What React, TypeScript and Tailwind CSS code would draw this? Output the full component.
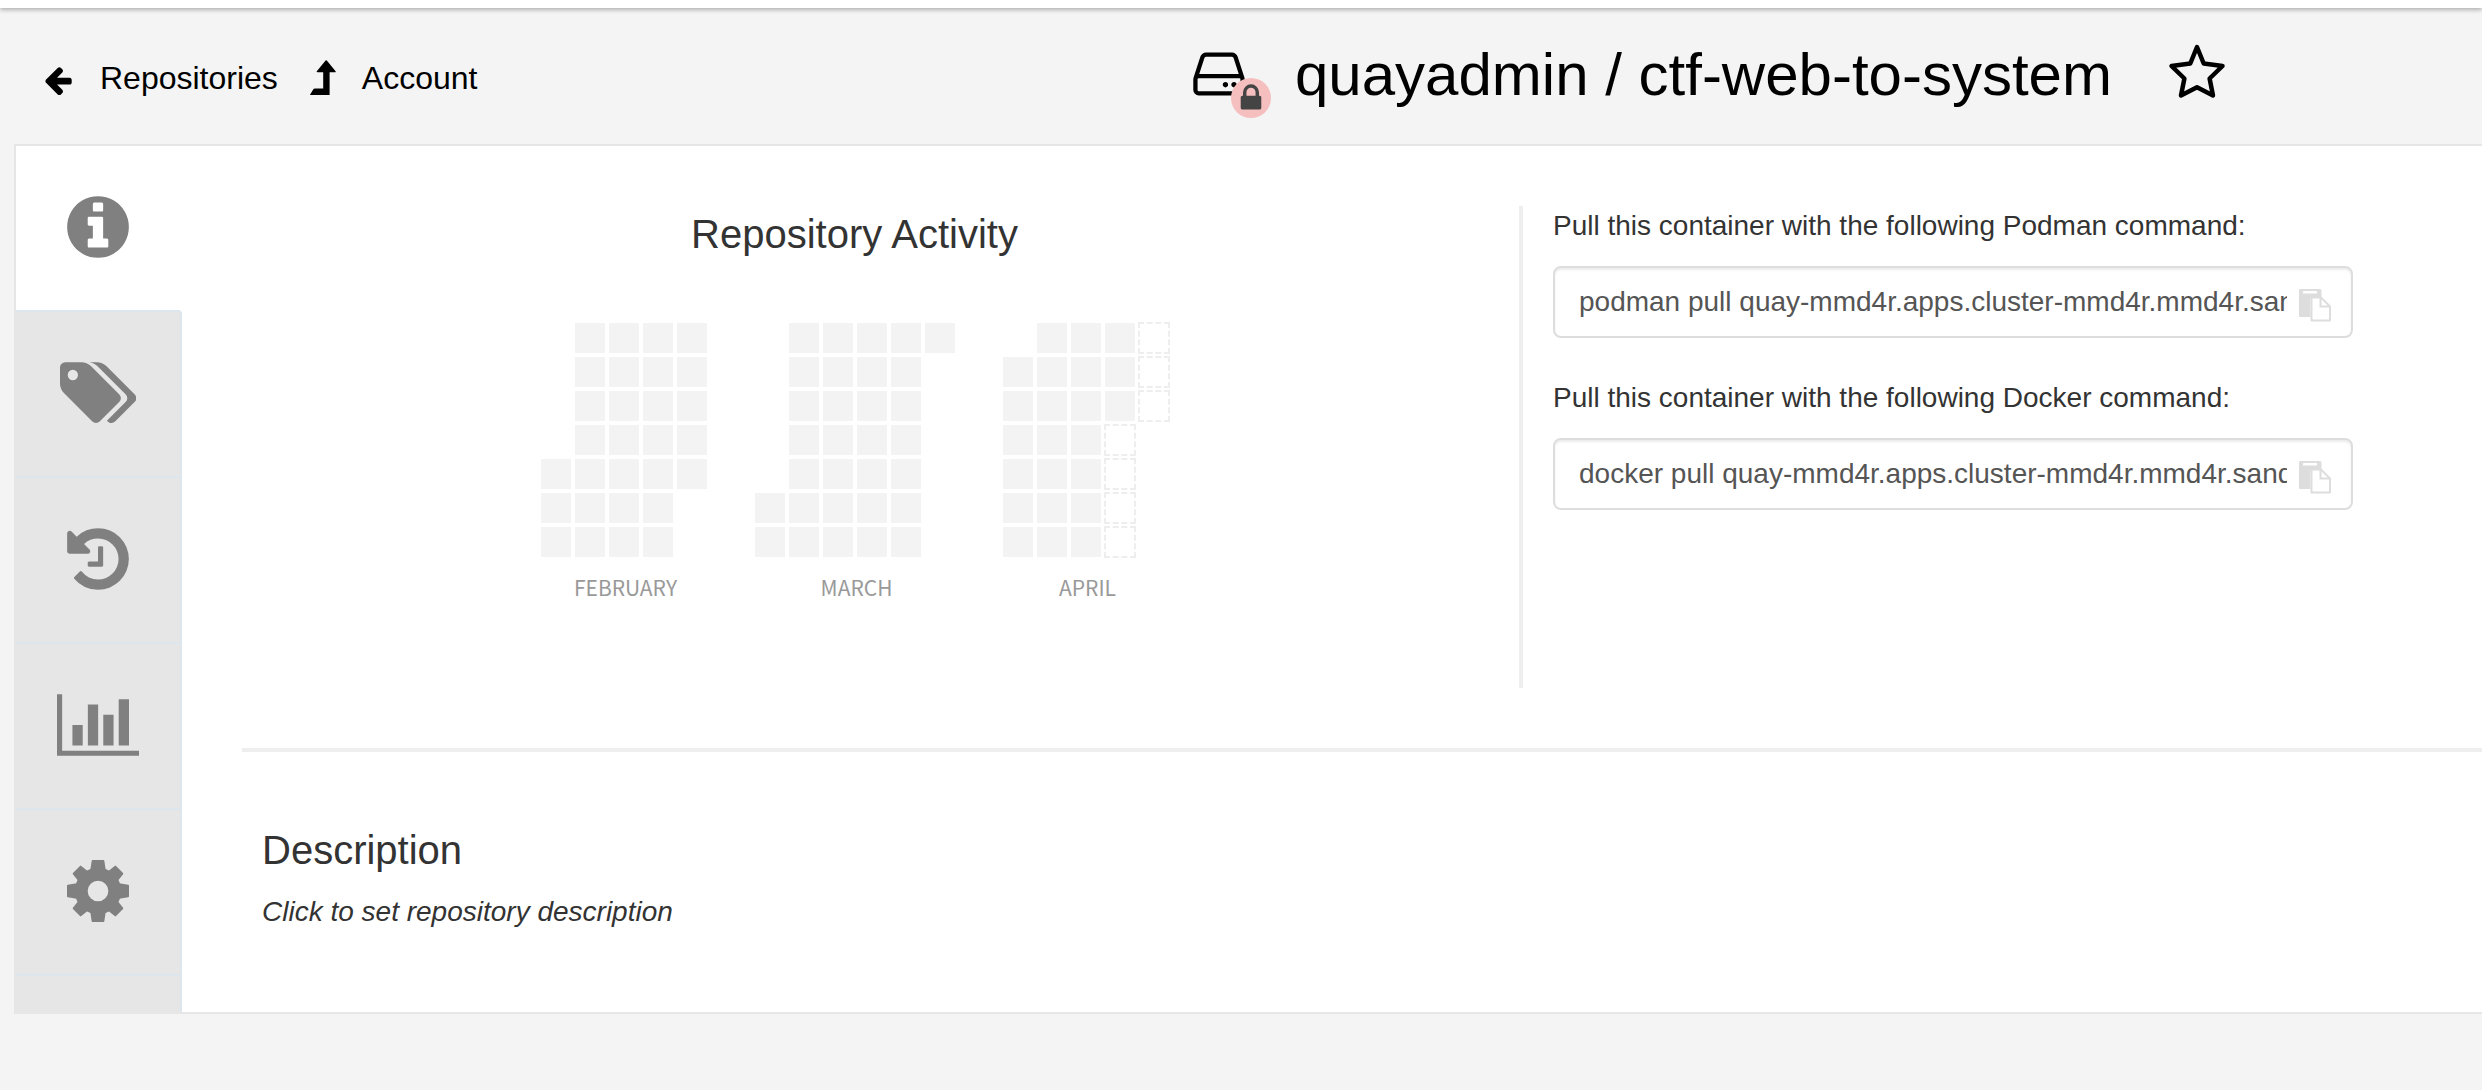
import React from "react";

type GlyphProps = { d: string; viewBox?: string; className: string };

function Glyph({ d, viewBox = "0 0 1792 1792", className }: GlyphProps) {
  return (
    <svg viewBox={viewBox} className={className} fill="currentColor" aria-hidden="true">
      <path d={d} />
    </svg>
  );
}

const ARROW_LEFT =
  "M1664 896v128q0 53-32.5 90.5t-84.5 37.5h-704l293 294q38 36 38 90t-38 90l-75 76q-37 37-90 37-52 0-91-37l-651-652q-37-37-37-90 0-52 37-91l651-650q38-38 91-38 52 0 90 38l75 74q38 38 38 91t-38 91l-293 293h704q52 0 84.5 37.5t32.5 90.5z";
const HDD =
  "M1168 1216q0 33-23.5 56.5t-56.5 23.5-56.5-23.5-23.5-56.5 23.5-56.5 56.5-23.5 56.5 23.5 23.5 56.5zm256 0q0 33-23.5 56.5t-56.5 23.5-56.5-23.5-23.5-56.5 23.5-56.5 56.5-23.5 56.5 23.5 23.5 56.5zm112 160v-320q0-13-9.5-22.5t-22.5-9.5h-1216q-13 0-22.5 9.5t-9.5 22.5v320q0 13 9.5 22.5t22.5 9.5h1216q13 0 22.5-9.5t9.5-22.5zm-1230-480h1180l-157-482q-4-13-16-21.5t-26-8.5h-782q-14 0-26 8.5t-16 21.5zm1358 160v320q0 66-47 113t-113 47h-1216q-66 0-113-47t-47-113v-320q0-25 16-75l197-606q17-53 63-86t101-33h782q55 0 101 33t63 86l197 606q16 50 16 75z";
const LOCK =
  "M640 768h512v-192q0-106-75-181t-181-75-181 75-75 181v192zm832 96v576q0 40-28 68t-68 28h-960q-40 0-68-28t-28-68v-576q0-40 28-68t68-28h32v-192q0-184 132-316t316-132 316 132 132 316v192h32q40 0 68 28t28 68z";
const INFO =
  "M1152 1376v-160q0-14-9-23t-23-9h-96v-512q0-14-9-23t-23-9h-320q-14 0-23 9t-9 23v160q0 14 9 23t23 9h96v320h-96q-14 0-23 9t-9 23v160q0 14 9 23t23 9h448q14 0 23-9t9-23zm-128-896v-160q0-14-9-23t-23-9h-192q-14 0-23 9t-9 23v160q0 14 9 23t23 9h192q14 0 23-9t9-23zm640 416q0 209-103 385.5t-279.5 279.5-385.5 103-385.5-103-279.5-279.5-103-385.5 103-385.5 279.5-279.5 385.5-103 385.5 103 279.5 279.5 103 385.5z";
const TAGS =
  "M448 448q0-53-37.5-90.5t-90.5-37.5-90.5 37.5-37.5 90.5 37.5 90.5 90.5 37.5 90.5-37.5 37.5-90.5zm1067 576q0 53-37 90l-491 492q-39 37-91 37-53 0-90-37l-715-716q-38-37-64.5-101t-26.5-117v-416q0-52 38-90t90-38h416q53 0 117 26.5t102 64.5l715 714q37 39 37 91zm384 0q0 53-37 90l-491 492q-39 37-91 37-36 0-59-14t-53-45l470-470q37-37 37-90 0-52-37-91l-715-714q-38-38-102-64.5t-117-26.5h224q53 0 117 26.5t102 64.5l715 714q37 39 37 91z";
const HISTORY =
  "M1664 896q0 156-61 298t-164 245-245 164-298 61q-172 0-327-72.5t-264-204.5q-7-10-6.5-22.5t8.5-20.5l137-138q10-9 25-9 16 2 23 12 73 95 179 147t225 52q104 0 198.5-40.5t163.5-109.5 109.5-163.5 40.5-198.5-40.5-198.5-109.5-163.5-163.5-109.5-198.5-40.5q-98 0-188 35.5t-160 101.5l137 138q31 30 14 69-17 40-59 40h-448q-26 0-45-19t-19-45v-448q0-42 40-59 39-17 69 14l130 129q107-101 244.5-156.5t284.5-55.5q156 0 298 61t245 164 164 245 61 298zm-640-288v448q0 14-9 23t-23 9h-320q-14 0-23-9t-9-23v-64q0-14 9-23t23-9h224v-352q0-14 9-23t23-9h64q14 0 23 9t9 23z";
const CHART =
  "M640 896v512h-256v-512h256zm384-512v1024h-256v-1024h256zm1024 1152v128h-2048v-1536h128v1408h1920zm-640-896v768h-256v-768h256zm384-384v1152h-256v-1152h256z";

function Cog() {
  return (
    <svg
      viewBox="-108 -108 216 216"
      className="h-[72px]"
      fill="currentColor"
      stroke="currentColor"
      strokeWidth="6"
      strokeLinejoin="round"
      fillRule="evenodd"
      aria-hidden="true"
    >
      <path d="M-16-90H16L20-64L33-58L52-73L73-52L58-33L64-20L90-16V16L64 20L58 33L73 52L52 73L33 58L20 64L16 90H-16L-20 64L-33 58L-52 73L-73 52L-58 33L-64 20L-90 16V-16L-64-20L-58-33L-73-52L-52-73L-33-58L-20-64ZM34 0A34 34 0 1 0-34 0A34 34 0 1 0 34 0Z" />
    </svg>
  );
}

const tabs = [
  { label: "Information", icon: <Glyph d={INFO} className="h-[72px]" /> },
  { label: "Tags", icon: <Glyph d={TAGS} viewBox="0 0 1899 1792" className="h-[72px]" /> },
  { label: "Tag History", icon: <Glyph d={HISTORY} className="h-[72px]" /> },
  { label: "Usage Logs", icon: <Glyph d={CHART} viewBox="0 0 2048 1792" className="h-[72px]" /> },
  { label: "Settings", icon: <Cog /> },
];

// One string per weekday row: "x" is a past day, "o" an upcoming day, "." is outside the month.
const months = [
  { name: "FEBRUARY", rows: [".xxxx", ".xxxx", ".xxxx", ".xxxx", "xxxxx", "xxxx.", "xxxx."] },
  { name: "MARCH", rows: [".xxxxx", ".xxxx.", ".xxxx.", ".xxxx.", ".xxxx.", "xxxxx.", "xxxxx."] },
  { name: "APRIL", rows: [".xxxo", "xxxxo", "xxxxo", "xxxo.", "xxxo.", "xxxo.", "xxxo."] },
];

const dayStyle: Record<string, string> = {
  x: "size-[30px] bg-[#f3f3f3]",
  o: "-m-px size-8 border-2 border-dashed border-[#eeeeee]",
  ".": "size-[30px]",
};

function Month({ name, rows }: { name: string; rows: string[] }) {
  return (
    <div className="flex flex-col items-center">
      <div className="flex flex-col gap-1">
        {rows.map((row, r) => (
          <div key={r} className="flex gap-1">
            {row.split("").map((day, c) => (
              <div key={c} className={dayStyle[day]} />
            ))}
          </div>
        ))}
      </div>
      <div className="mt-3.5 pl-1 font-['Noto_Sans_CJK_SC',sans-serif] text-[21px] leading-8 text-[#999999]">
        {name}
      </div>
    </div>
  );
}

function CopyIcon() {
  return (
    <svg viewBox="0 0 32 33" className="h-[33px] w-8" aria-hidden="true">
      <path d="M1 0h20a1.500 1.500 0 0 1 1.500 1.500V8H13a1.500 1.500 0 0 0-1.500 1.500V28H1a1 1 0 0 1-1-1V1a1 1 0 0 1 1-1z" fill="#dddddd" />
      <rect x="4" y="2" width="14" height="2.500" rx="0.500" fill="#fff" />
      <path d="M12.500 8.500H22L31 17.500V31.500H12.500z" fill="#fff" stroke="#dddddd" strokeWidth="2" strokeLinejoin="round" />
      <path d="M21.500 8.500V17.500H31" fill="none" stroke="#dddddd" strokeWidth="2" />
    </svg>
  );
}

function PullCommand({ id, tool, command }: { id: string; tool: string; command: string }) {
  return (
    <div className="flex flex-col">
      <label htmlFor={id} className="text-[28px] leading-10 text-[#333333]">
        Pull this container with the following {tool} command:
      </label>
      <div className="mt-5 flex h-[72px] max-w-[800px] items-center rounded-lg border-2 border-[#dddddd] bg-white pr-5 pl-6 shadow-[inset_0_2px_2px_rgba(0,0,0,0.075)]">
        <input
          id={id}
          readOnly
          value={command}
          className="min-w-0 flex-1 bg-transparent text-[28px] leading-10 text-[#555555] outline-none"
        />
        <button type="button" aria-label={"Copy " + tool + " command"} className="mt-1.5 ml-3">
          <CopyIcon />
        </button>
      </div>
    </div>
  );
}

export default function App() {
  return (
    <div className="min-h-screen overflow-x-hidden bg-[#f4f4f4] font-['Liberation_Sans',Arial,sans-serif]">
      <div className="h-2 bg-white shadow-[0_2px_4px_rgba(0,0,0,0.28)]" />

      <header className="grid h-[136px] grid-cols-[1191fr_1291fr] text-black">
        <nav className="flex items-start pt-[50px] pl-[42px] text-[32px] leading-10">
          <a href="#repositories" className="flex items-center">
            <Glyph d={ARROW_LEFT} className="mt-1 size-8" />
            <span className="ml-[26px]">Repositories</span>
          </a>
          <a href="#account" className="ml-8 flex items-center">
            <svg viewBox="0 0 26 36" className="h-9 w-[26px]" fill="currentColor" aria-hidden="true">
              <path d="M15.800 0.300Q16.300 0 16.800 0.600L25.600 11.200Q26 12.200 25 12.200H19.600V35H.5Q-.2 35 .3 34.200L3.500 29Q4 28.400 4.800 28.400H13.200V12.200H7.500Q6.200 12.200 6.800 11.200Z" />
            </svg>
            <span className="ml-[26px]">Account</span>
          </a>
        </nav>
        <div className="flex items-start pt-8">
          <div className="relative -ml-0.5">
            <Glyph d={HDD} className="mt-1 size-[60px]" />
            <span className="absolute top-[38px] left-[42px] flex size-10 items-center justify-center rounded-full bg-[#f5bfbf] text-[#444444]">
              <Glyph d={LOCK} className="size-8" />
            </span>
          </div>
          <h1 className="ml-[46px] text-[60px] leading-[70px] whitespace-nowrap">quayadmin / ctf-web-to-system</h1>
          <button type="button" aria-label="Star repository" className="mt-1 ml-14">
            <svg viewBox="0 0 58 56" className="h-14 w-[58px]" fill="none" stroke="currentColor" strokeWidth="4.500" strokeMiterlimit="3" strokeLinejoin="round" aria-hidden="true">
              <path d="M29 3L35.700 19.500L54.500 22L41.600 34.500L45 51.500L29 43.200L13 51.500L16.400 34.500L3.500 22L22.300 19.500Z" />
            </svg>
          </button>
        </div>
      </header>

      <main className="ml-3.5 flex border-y-2 border-l-2 border-[#e6e6e6] bg-white">
        <nav className="flex w-[166px] shrink-0 flex-col text-[#808080]">
          {tabs.map((tab, i) => (
            <button
              key={tab.label}
              type="button"
              aria-label={tab.label}
              className={
                i === 0
                  ? "flex h-[164px] items-center justify-center bg-white pr-0.5 pb-0.5"
                  : i === 1
                    ? "flex h-[166px] items-center justify-center rounded-tr border-t-2 border-r-2 border-[#dde6ed] bg-[#e6e6e6] pb-0.5"
                    : "flex h-[166px] items-center justify-center border-t-2 border-r-2 border-[#dde6ed] bg-[#e6e6e6] pb-0.5"
              }
            >
              {tab.icon}
            </button>
          ))}
          <div className="flex-1 border-t-2 border-r-2 border-[#dde6ed] bg-[#e6e6e6]" />
        </nav>

        <div className="min-w-0 flex-1">
          <div className="grid grid-cols-[1337fr_963fr] pt-[60px]">
            <section className="flex flex-col items-center pl-2">
              <h2 className="mt-1 text-[40px] leading-12 text-[#333333]">Repository Activity</h2>
              <div className="mt-[65px] flex gap-12">
                {months.map((month) => (
                  <Month key={month.name} name={month.name} rows={month.rows} />
                ))}
              </div>
            </section>
            <section className="flex min-h-[482px] flex-col gap-10 border-l-4 border-[#eeeeee] pl-[30px]">
              <PullCommand
                id="podman-pull"
                tool="Podman"
                command="podman pull quay-mmd4r.apps.cluster-mmd4r.mmd4r.sandbox.example.com/quayadmin/ctf-web-to-system"
              />
              <PullCommand
                id="docker-pull"
                tool="Docker"
                command="docker pull quay-mmd4r.apps.cluster-mmd4r.mmd4r.sandbox.example.com/quayadmin/ctf-web-to-system"
              />
            </section>
          </div>

          <section className="mt-[60px] ml-[60px] border-t-4 border-[#eeeeee] pt-[74px] pb-20 pl-5 text-[#333333]">
            <h2 className="text-[40px] leading-12">Description</h2>
            <button type="button" className="mt-[18px] block text-[28px] leading-10 italic">
              Click to set repository description
            </button>
          </section>
        </div>
      </main>
    </div>
  );
}
